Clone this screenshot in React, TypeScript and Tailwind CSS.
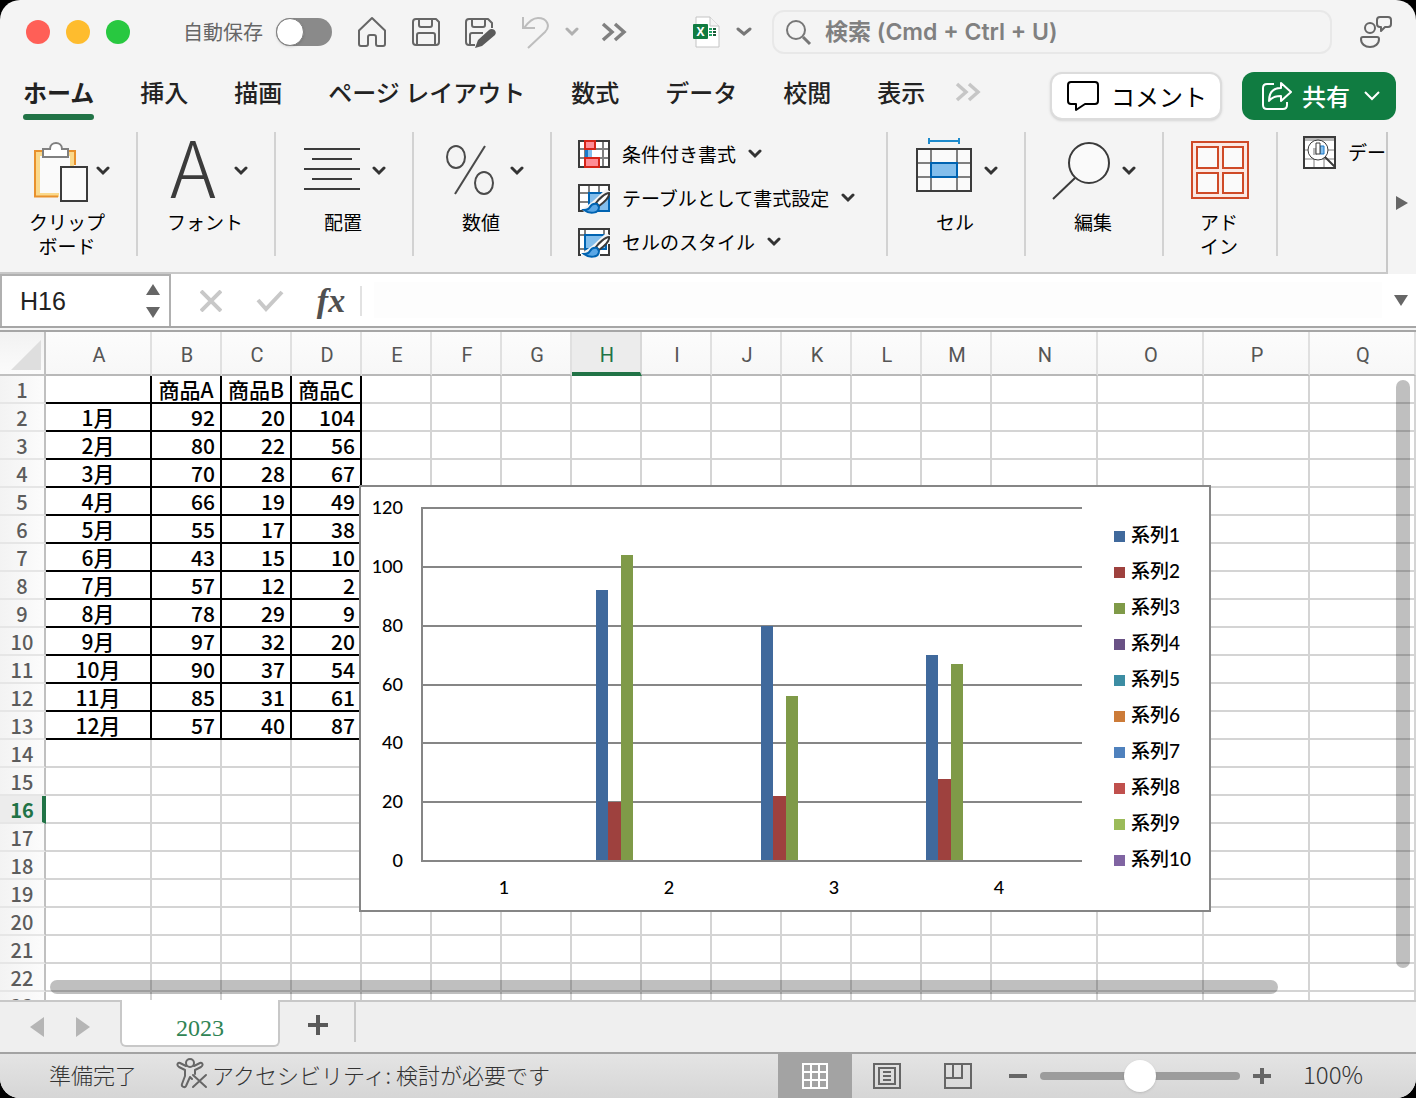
import { useState } from 'react';
import type { ReactNode } from 'react';
import clsx from 'clsx';

const TABS = ['ホーム', '挿入', '描画', 'ページ レイアウト', '数式', 'データ', '校閲', '表示'];

const COLUMNS = 'ABCDEFGHIJKLMNOPQ'.split('');
const WIDE_COLUMNS = ['A', 'N', 'O', 'P'];
const ROW_COUNT = 23;

const SHEET: (string | number)[][] = [
  ['', '商品A', '商品B', '商品C'],
  ['1月', 92, 20, 104],
  ['2月', 80, 22, 56],
  ['3月', 70, 28, 67],
  ['4月', 66, 19, 49],
  ['5月', 55, 17, 38],
  ['6月', 43, 15, 10],
  ['7月', 57, 12, 2],
  ['8月', 78, 29, 9],
  ['9月', 97, 32, 20],
  ['10月', 90, 37, 54],
  ['11月', 85, 31, 61],
  ['12月', 57, 40, 87],
];

const SERIES = [
  { name: '系列1', color: 'bg-[#40699c]' },
  { name: '系列2', color: 'bg-[#9e413e]' },
  { name: '系列3', color: 'bg-[#7f9a48]' },
  { name: '系列4', color: 'bg-[#695185]' },
  { name: '系列5', color: 'bg-[#3c8da3]' },
  { name: '系列6', color: 'bg-[#cc7b38]' },
  { name: '系列7', color: 'bg-[#4f81bd]' },
  { name: '系列8', color: 'bg-[#c0504d]' },
  { name: '系列9', color: 'bg-[#9bbb59]' },
  { name: '系列10', color: 'bg-[#8064a2]' },
];

const BAR_COLORS = ['#40699c', '#9e413e', '#7f9a48'];

function Chevron({ className = 'text-[#333333]' }: { className?: string }) {
  return (
    <svg width="14" height="10" viewBox="0 0 14 10" fill="none" className={clsx('shrink-0', className)}>
      <path d="M2 2l5 5 5-5" stroke="currentColor" strokeWidth="3" strokeLinecap="round" />
    </svg>
  );
}

function DoubleChevron({ className }: { className: string }) {
  return (
    <svg width="26" height="20" viewBox="0 0 26 20" fill="none" className={className}>
      <path d="M2 2l9 8-9 8M14 2l9 8-9 8" stroke="currentColor" strokeWidth="3.5" />
    </svg>
  );
}

function HomeIcon() {
  return (
    <svg width="28" height="32" viewBox="0 0 28 32" fill="none" stroke="#666666" strokeWidth="2" strokeLinejoin="round">
      <path d="M1 14.5L14 2l13 12.500V28q0 2-2 2h-5q-2 0-2-2v-7q0-2-2-2h-4q-2 0-2 2v7q0 2-2 2H3q-2 0-2-2z" />
    </svg>
  );
}

function SaveIcon() {
  return (
    <svg width="28" height="28" viewBox="0 0 28 28" fill="none" stroke="#666666" strokeWidth="2" strokeLinejoin="round">
      <path d="M4 1h20l3 3v20q0 3-3 3H4q-3 0-3-3V4q0-3 3-3z" />
      <path d="M7 1v6q0 2 2 2h9q2 0 2-2V1M5 27V17q0-2 2-2h14q2 0 2 2v10" />
    </svg>
  );
}

function SaveEditIcon() {
  return (
    <svg width="32" height="32" viewBox="0 0 32 32" fill="none" stroke="#666666" strokeWidth="2" strokeLinejoin="round">
      <path d="M10 29H4q-3 0-3-3V6q0-3 3-3h19l4 4v5M7 3v6q0 2 2 2h9q2 0 2-2V3M5 29V19q0-2 2-2h11" />
      <path d="M24 14c3-3 9 1 6 5L17 30l-7 2 3-8z" fill="#5a5a5a" stroke="none" />
    </svg>
  );
}

function UndoIcon() {
  return (
    <svg width="28" height="34" viewBox="0 0 28 34" fill="none" stroke="#bdbdbd" strokeWidth="2">
      <path d="M1 2v11h12M2 13C7 6 11 3 16 3c9 0 13 8 7 14L6 33" />
    </svg>
  );
}

function WorkbookIcon() {
  return (
    <svg width="28" height="32" viewBox="0 0 28 32">
      <path d="M3 1h14l9 9v21H3z" fill="#ffffff" stroke="#c4c4c4" />
      <path d="M17 1v9h9" fill="#f4f4f4" stroke="#c4c4c4" />
      <rect x="0" y="8" width="15" height="15" rx="1" fill="#107c41" />
      <path d="M16 12h3v2h-3zM16 15h3v2h-3zM16 18h3v2h-3z" fill="#21a366" />
      <path d="M20 12h3v2h-3zM20 15h3v2h-3zM20 18h3v2h-3z" fill="#185c37" />
      <text x="7.500" y="20" textAnchor="middle" fontSize="12" fontWeight="700" fontFamily="Open Sans, sans-serif" fill="#ffffff">
        X
      </text>
    </svg>
  );
}

function PresenceIcon() {
  return (
    <svg width="32" height="32" viewBox="0 0 32 32" fill="none" stroke="#666666" strokeWidth="2">
      <circle cx="10" cy="12" r="5" />
      <path d="M3 21h14q2 0 2 2c0 5-4 8-9 8s-9-3-9-8q0-2 2-2z" />
      <path d="M20 1h8q3 0 3 3v4q0 3-3 3h-3l-4 4v-4h-1q-3 0-3-3V4q0-3 3-3z" strokeLinejoin="round" />
    </svg>
  );
}

function ClipboardIcon() {
  return (
    <svg width="62" height="70" viewBox="0 0 62 70" fill="none">
      <path d="M9 15h40v45H9z" fill="#fafafa" />
      <path d="M12 18h35v-3M12 16v43h21M46 16v14" stroke="#fad98c" strokeWidth="4" />
      <path d="M32 60.500H9V15h8M41 15h8v14" stroke="#e8912d" strokeWidth="2" />
      <path d="M17 13h7c0-8 12-8 12 0h6v8H17z" fill="#ffffff" stroke="#808080" strokeWidth="2" />
      <path d="M35 31h26v34H35z" fill="#fafafa" stroke="#3b3b3b" strokeWidth="2" />
    </svg>
  );
}

function FontIcon() {
  return (
    <svg width="62" height="70" viewBox="0 0 62 70" className="overflow-visible">
      <text x="29" y="62" textAnchor="middle" fontSize="78" fontWeight="300" fontFamily="Noto Sans CJK JP, Roboto, sans-serif" fill="#3b3b3b">
        A
      </text>
    </svg>
  );
}

function AlignIcon() {
  return (
    <svg width="62" height="70" viewBox="0 0 62 70" stroke="#3b3b3b" strokeWidth="2">
      <path d="M2 13h56M10 23h40M2 33h56M10 43h40M2 53h56" />
    </svg>
  );
}

function PercentIcon() {
  return (
    <svg width="62" height="70" viewBox="0 0 62 70" fill="none" stroke="#4a4a4a" strokeWidth="2">
      <ellipse cx="16" cy="21" rx="9" ry="11" />
      <ellipse cx="44" cy="47" rx="9" ry="11" />
      <path d="M45 10L15 58" />
    </svg>
  );
}

function CellsIcon() {
  return (
    <svg width="62" height="70" viewBox="0 0 62 70" fill="none">
      <path d="M3 13h54v42H3z" fill="#fafafa" />
      <path d="M17 13v42M43 13v42M3 27h54M3 41h54" stroke="#808080" strokeWidth="2" />
      <path d="M3 13h54v42H3z" stroke="#3b3b3b" strokeWidth="2" />
      <path d="M17 27h26v14H17z" fill="#83beec" stroke="#0063b1" strokeWidth="2" />
      <path d="M15 5h30M15 2v6M45 2v6" stroke="#1e8bcd" strokeWidth="2" />
    </svg>
  );
}

function FindIcon() {
  return (
    <svg width="62" height="70" viewBox="0 0 62 70" fill="none" stroke="#3b3b3b" strokeWidth="2">
      <circle cx="37" cy="27" r="20" fill="#fafafa" />
      <path d="M23 42L1 63" />
    </svg>
  );
}

function AddInIcon() {
  return (
    <svg width="60" height="70" viewBox="0 0 60 70" fill="#fafafa" stroke="#cf4a27" strokeWidth="2">
      <path d="M2 6h56v56H2z" fill="#fbe9e4" />
      <path d="M7 11h21v21H7zM33 11h20v21H33zM7 37h21v20H7zM33 37h20v20H33z" />
    </svg>
  );
}

function ConditionalIcon() {
  return (
    <svg width="32" height="30" viewBox="0 0 32 30" fill="none">
      <path d="M1 2h30v26H1z" fill="#ffffff" />
      <path d="M7 2v26M25 2v26M1 10h30M1 19h30" stroke="#808080" strokeWidth="2" />
      <path d="M14 11h10v7H14z" fill="#ffffff" />
      <path d="M1 2h30v26H1z" stroke="#3b3b3b" strokeWidth="2" />
      <path d="M7 11h7v8H7z" fill="#83beec" />
      <path d="M7 11h3v8H7z" fill="#1979ca" />
      <path d="M7 2h10v8H7zM7 19h14v9H7z" fill="#ff8d96" stroke="#d62418" strokeWidth="2" />
    </svg>
  );
}

function Brush() {
  return (
    <>
      <path d="M31 9L17 22l-11 8" stroke="#f4f4f4" strokeWidth="7" />
      <path d="M31 11c-4 0-11 7-13 10l3 3c4-3 11-9 10-13z" fill="#ffffff" stroke="#3b3b3b" strokeWidth="2" />
      <path d="M19 22c-4-1-6 1-7 3-1 2-3 3-6 3 5 4 15 4 15-3z" fill="#5aa7e6" stroke="#0063b1" strokeWidth="2" />
    </>
  );
}

function FormatTableIcon() {
  return (
    <svg width="32" height="32" viewBox="0 0 32 32" fill="none">
      <path d="M1 3h30v26H1z" fill="#ffffff" />
      <path d="M11 3v26M21 3v8M1 11h30M1 20h10" stroke="#808080" strokeWidth="2" />
      <path d="M11 11h20v18H11z" fill="#83beec" stroke="#0063b1" strokeWidth="2" />
      <path d="M9 29H1V3h30v6" stroke="#3b3b3b" strokeWidth="2" />
      <Brush />
    </svg>
  );
}

function CellStyleIcon() {
  return (
    <svg width="32" height="32" viewBox="0 0 32 32" fill="none">
      <path d="M1 3h30v26H1z" fill="#ffffff" />
      <path d="M7 3v26M26 3v6M1 9h30M1 23h8" stroke="#808080" strokeWidth="2" />
      <path d="M7 9h21v14H7z" fill="#83beec" stroke="#0063b1" strokeWidth="2" />
      <path d="M3 29H1V3h30v6M22 29h9V18" stroke="#3b3b3b" strokeWidth="2" />
      <Brush />
    </svg>
  );
}

function AnalyzeIcon() {
  return (
    <svg width="34" height="34" viewBox="0 0 34 34" fill="none">
      <path d="M2 2h31v31H2z" fill="#ffffff" />
      <path d="M2 2h31v4H2z" fill="#b8b8b8" />
      <path d="M2 15h31M2 24h31M12 22v10M22 22v10" stroke="#808080" />
      <path d="M2 2h31v31H2z" stroke="#3b3b3b" strokeWidth="2" />
      <circle cx="16" cy="15" r="10" fill="#ffffff" stroke="#3b3b3b" />
      <path d="M11 13h4v7h-4z" fill="#b8b8b8" />
      <path d="M18 11h4v8h-4z" fill="#83beec" stroke="#1979ca" />
      <path d="M14 8h4v11h-4z" fill="#ffffff" stroke="#3b3b3b" />
      <path d="M23 22l10 10" stroke="#3b3b3b" strokeWidth="2" />
    </svg>
  );
}

function AccessibilityIcon() {
  return (
    <svg width="32" height="32" viewBox="0 0 32 32" fill="none" stroke="#666666" strokeWidth="2" strokeLinejoin="round" strokeLinecap="round" className="shrink-0">
      <circle cx="14" cy="5" r="4" />
      <path d="M10 8L4 5C2 4 0 7 3 9l6 3v6L6 26c-1 3 3 4 4 2l4-9 2 2M18 8l6-3c2-1 4 2 1 4l-6 3v4" />
      <path d="M17 17l13 12M30 17L17 29" />
    </svg>
  );
}

function TitleBar() {
  const [autoSave, setAutoSave] = useState(false);

  return (
    <header className="flex h-16 shrink-0 items-center pl-[26px] pr-6">
      <div className="flex gap-4">
        <button aria-label="閉じる" className="size-6 rounded-full bg-[#ff5f57]" />
        <button aria-label="しまう" className="size-6 rounded-full bg-[#febc2e]" />
        <button aria-label="拡大" className="size-6 rounded-full bg-[#28c840]" />
      </div>
      <label className="ml-[53px] flex shrink-0 items-center gap-[13px] text-xl text-[#666666]">
        自動保存
        <input
          type="checkbox"
          checked={autoSave}
          onChange={(e) => setAutoSave(e.target.checked)}
          className="h-7 w-14 appearance-none rounded-full bg-[#8a8a8a] before:block before:size-7 before:rounded-full before:border before:border-[#7d7d7d] before:bg-white before:shadow checked:bg-[#107c41] checked:before:ml-7"
        />
      </label>
      <button aria-label="ホーム画面" className="ml-[26px]"><HomeIcon /></button>
      <button aria-label="保存" className="ml-[26px]"><SaveIcon /></button>
      <button aria-label="名前を付けて保存" className="ml-[25px]"><SaveEditIcon /></button>
      <button aria-label="元に戻す" className="ml-[25px]"><UndoIcon /></button>
      <button aria-label="元に戻す履歴" className="ml-[15px]"><Chevron className="text-[#b0b0b0]" /></button>
      <button aria-label="その他のコマンド" className="ml-[22px]"><DoubleChevron className="text-[#808080]" /></button>
      <button aria-label="ブック" className="ml-[66px]"><WorkbookIcon /></button>
      <button aria-label="ブックのメニュー" className="ml-[15px]">
        <svg width="16" height="10" viewBox="0 0 16 10" fill="none" stroke="#777777" strokeWidth="3" strokeLinecap="round">
          <path d="M2 2l6 5 6-5" />
        </svg>
      </button>
      <div className="ml-5 flex h-11 min-w-0 flex-1 items-center gap-3 rounded-xl border-2 border-[#e8e8e8] px-[11px]">
        <svg width="28" height="28" viewBox="0 0 28 28" fill="none" stroke="#777777" className="shrink-0">
          <circle cx="11" cy="12" r="9" strokeWidth="2" />
          <path d="M18 19l7 7" strokeWidth="3" />
        </svg>
        <input
          type="search"
          aria-label="検索"
          placeholder="検索 (Cmd + Ctrl + U)"
          className="min-w-0 flex-1 bg-transparent font-['Inter','Noto_Sans_CJK_JP',sans-serif] text-[23px] font-semibold outline-none placeholder:text-[#808080]"
        />
      </div>
      <button aria-label="プレゼンス" className="ml-7"><PresenceIcon /></button>
    </header>
  );
}

function TabBar() {
  const [active, setActive] = useState('ホーム');

  return (
    <div className="flex h-[60px] shrink-0 items-start pl-[23px] pr-5 pt-2">
      <nav className="flex gap-[46px] text-2xl font-medium text-[#222222]">
        {TABS.map((tab) => (
          <button
            key={tab}
            onClick={() => setActive(tab)}
            className={clsx('flex h-12 flex-col justify-between whitespace-nowrap leading-10', active === tab && 'font-bold')}
          >
            {tab}
            {active === tab && <span className="block h-[6px] w-full rounded-full bg-[#217346]" />}
          </button>
        ))}
      </nav>
      <button aria-label="その他のタブ" className="ml-[30px] mt-[10px]"><DoubleChevron className="text-[#c6c6c6]" /></button>
      <button className="ml-auto flex h-12 w-[172px] items-center justify-center gap-3 rounded-xl border-2 border-[#dcdcdc] bg-white pl-[2px] text-2xl text-black shadow-sm">
        <svg width="32" height="32" viewBox="0 0 32 32" fill="none" stroke="currentColor" strokeWidth="2" strokeLinejoin="round" className="shrink-0">
          <path d="M4 2h24q3 0 3 3v16q0 3-3 3H18l-9 6v-6H4q-3 0-3-3V5q0-3 3-3z" />
        </svg>
        コメント
      </button>
      <button className="ml-5 flex h-12 w-[154px] items-center justify-center gap-[9px] rounded-xl bg-[#107c41] pl-1 text-2xl font-medium text-white">
        <svg width="32" height="30" viewBox="0 0 32 30" fill="none" stroke="currentColor" strokeWidth="2" strokeLinejoin="round" className="shrink-0">
          <path d="M13 3H6Q2 3 2 7v17q0 4 4 4h16q4 0 4-4v-3" />
          <path d="M20 2l10 9-10 9v-5c-6 0-9 1-12 5 0-8 4-13 12-13z" />
        </svg>
        共有
        <svg width="18" height="12" viewBox="0 0 18 12" fill="none" className="ml-1 shrink-0">
          <path d="M2 2l7 7 7-7" stroke="currentColor" strokeWidth="2" />
        </svg>
      </button>
    </div>
  );
}

function RibbonGroup({ icon, lines, menu = true }: { icon: ReactNode; lines: string[]; menu?: boolean }) {
  return (
    <button
      className={clsx(
        "flex h-[124px] shrink-0 flex-col items-center gap-[6px] border-r-2 border-[#d2d2d2] pt-1 font-['Liberation_Sans','Noto_Sans_CJK_JP',sans-serif] text-[19px] leading-6 text-black",
        menu ? 'w-[138px]' : 'w-[114px]',
      )}
    >
      <span className="flex items-center gap-2">
        {icon}
        {menu && <Chevron />}
      </span>
      <span className="pr-[2px]">
        {lines.map((line) => (
          <span key={line} className="block">{line}</span>
        ))}
      </span>
    </button>
  );
}

function StyleCommand({ icon, label }: { icon: ReactNode; label: string }) {
  return (
    <button className="flex h-11 items-center gap-3 text-[19px] text-black">
      {icon}
      <span className="whitespace-nowrap">{label}</span>
      <Chevron />
    </button>
  );
}

function Ribbon() {
  return (
    <div className="flex shrink-0">
      <div className="flex h-[150px] min-w-0 flex-1 items-start border-b-2 border-[#c8c8c8] pt-2">
        <RibbonGroup icon={<ClipboardIcon />} lines={['クリップ', 'ボード']} />
        <RibbonGroup icon={<FontIcon />} lines={['フォント']} />
        <RibbonGroup icon={<AlignIcon />} lines={['配置']} />
        <RibbonGroup icon={<PercentIcon />} lines={['数値']} />
        <div className="flex w-[336px] shrink-0 items-start justify-between">
          <div className="pl-[26px]">
            <StyleCommand icon={<ConditionalIcon />} label="条件付き書式" />
            <StyleCommand icon={<FormatTableIcon />} label="テーブルとして書式設定" />
            <StyleCommand icon={<CellStyleIcon />} label="セルのスタイル" />
          </div>
          <div className="h-[124px] w-[2px] bg-[#d2d2d2]" />
        </div>
        <RibbonGroup icon={<CellsIcon />} lines={['セル']} />
        <RibbonGroup icon={<FindIcon />} lines={['編集']} />
        <RibbonGroup icon={<AddInIcon />} lines={['アド', 'イン']} menu={false} />
        <div className="flex h-[140px] flex-1 border-r-2 border-[#c8c8c8] pl-6">
          <button className="flex h-10 items-center gap-3 whitespace-nowrap text-[19px] text-black">
            <AnalyzeIcon />
            デー
          </button>
        </div>
      </div>
      <button aria-label="リボンを右へスクロール" className="flex w-7 items-center justify-center pt-2">
        <svg width="12" height="14" viewBox="0 0 12 14" fill="#666666"><path d="M0 0l12 7-12 7z" /></svg>
      </button>
    </div>
  );
}

function FormulaBar() {
  const [cell, setCell] = useState('H16');

  return (
    <div className="flex h-[54px] shrink-0 items-stretch border-b-2 border-[#a6a6a6] bg-white">
      <div className="flex w-[171px] items-center border-2 border-b-0 border-[#b0b0b0] pl-[18px] pr-[9px]">
        <input
          aria-label="名前ボックス"
          value={cell}
          onChange={(e) => setCell(e.target.value)}
          className="min-w-0 flex-1 font-['Liberation_Sans',sans-serif] text-[25px] leading-none text-[#222222] outline-none"
        />
        <span className="flex flex-col gap-3">
          <button aria-label="上へ">
            <svg width="14" height="11" viewBox="0 0 14 11" fill="#666666"><path d="M0 11L7 0l7 11z" /></svg>
          </button>
          <button aria-label="下へ">
            <svg width="14" height="11" viewBox="0 0 14 11" fill="#666666"><path d="M0 0l7 11 7-11z" /></svg>
          </button>
        </span>
      </div>
      <div className="flex items-center pl-[29px] pt-[2px]">
        <button aria-label="キャンセル">
          <svg width="22" height="22" viewBox="0 0 22 22" stroke="#c8c8c8" strokeWidth="4"><path d="M1 1l20 20M21 1L1 21" /></svg>
        </button>
        <button aria-label="入力" className="ml-[34px]">
          <svg width="28" height="22" viewBox="0 0 28 22" fill="none" stroke="#c8c8c8" strokeWidth="4"><path d="M2 10l8 9L26 2" /></svg>
        </button>
        <button
          aria-label="関数の挿入"
          className="ml-[31px] w-8 font-['Liberation_Serif',serif] text-[34px] font-bold italic leading-none text-[#505050]"
        >
          fx
        </button>
        <div className="ml-[13px] h-[30px] w-[2px] bg-[#e2e2e2]" />
      </div>
      <input aria-label="数式バー" className="my-2 ml-3 min-w-0 flex-1 bg-[#fdfdfd] text-xl outline-none" />
      <button aria-label="数式バーの展開" className="pl-3 pr-2">
        <svg width="14" height="11" viewBox="0 0 14 11" fill="#666666"><path d="M0 0h14L7 11z" /></svg>
      </button>
    </div>
  );
}

function Chart() {
  const y = (value: number) => 374 - (value * 353) / 120;

  return (
    <figure
      aria-label="グラフ"
      className="absolute left-[359px] top-[153px] flex h-[427px] w-[852px] border-2 border-[#868686] bg-white font-['Lato','Noto_Sans_CJK_JP',sans-serif] text-black"
    >
      <svg width="724" height="423" viewBox="0 0 724 423" className="shrink-0 text-lg font-medium" fill="#000000">
        {[0, 20, 40, 60, 80, 100, 120].map((tick) => (
          <g key={tick}>
            <path d={`M61 ${Math.round(y(tick))}H721`} stroke="#868686" strokeWidth="2" />
            <text x="42" y={Math.round(y(tick)) + 6} textAnchor="end">{tick}</text>
          </g>
        ))}
        <path d="M61 20V375" stroke="#868686" strokeWidth="2" />
        {SHEET.slice(1, 4).map((row, i) =>
          row.slice(1).map((value, j) => (
            <rect
              key={`${i}-${j}`}
              x={235 + i * 165 + [0, 12, 25][j]}
              y={Math.round(y(Number(value)))}
              width={j === 1 ? 13 : 12}
              height={373 - Math.round(y(Number(value)))}
              fill={BAR_COLORS[j]}
            />
          )),
        )}
        {[1, 2, 3, 4].map((label, i) => (
          <text key={label} x={143 + i * 165} y="407" textAnchor="middle">{label}</text>
        ))}
      </svg>
      <ul className="pl-[29px] pt-[30px] text-[19px] font-medium">
        {SERIES.map((series) => (
          <li key={series.name} className="flex h-9 items-center gap-[6px] whitespace-nowrap">
            <span className={clsx('mt-[2px] size-[11px]', series.color)} />
            {series.name}
          </li>
        ))}
      </ul>
    </figure>
  );
}

function Grid() {
  return (
    <div className="relative min-h-0 flex-1 overflow-hidden border-t-2 border-[#a6a6a6] bg-white">
      <table className="w-full table-fixed border-separate border-spacing-0 text-[21px] leading-6 text-black">
        <colgroup>
          <col className="w-[46px]" />
          {COLUMNS.map((col) => (
            <col key={col} className={clsx(WIDE_COLUMNS.includes(col) ? 'w-[106px]' : col !== 'Q' && 'w-[70px]')} />
          ))}
        </colgroup>
        <thead>
          <tr className="h-11 text-xl text-[#555555]">
            <th className="border-b-2 border-r-2 border-[#c0c0c0] bg-linear-to-b from-[#f2f2f2] to-[#fbfbfb] p-0">
              <svg width="30" height="30" viewBox="0 0 30 30" fill="#dedede" className="ml-[11px] mt-1"><path d="M30 0v30H0z" /></svg>
            </th>
            {COLUMNS.map((col) => (
              <th
                key={col}
                scope="col"
                className={clsx(
                  "p-0 pl-[2px] font-['Roboto',sans-serif] font-normal",
                  col === 'H'
                    ? 'border-b-4 border-r-2 border-b-[#217346] border-r-[#d8d8d8] bg-[#ececec] pt-[5px] font-medium text-[#217346]'
                    : 'border-b-2 border-r-2 border-b-[#b8b8b8] border-r-[#e0e0e0] bg-linear-to-b from-[#fcfcfc] to-[#f7f7f7] pt-[3px]',
                )}
              >
                {col}
              </th>
            ))}
          </tr>
        </thead>
        <tbody>
          {Array.from({ length: ROW_COUNT }, (_, r) => (
            <tr key={r} className="h-7">
              <th
                scope="row"
                className={clsx(
                  'border-b-2 border-b-[#e6e6e6] p-0 pt-[2px] text-xl leading-6',
                  r === 15
                    ? 'border-r-4 border-r-[#217346] bg-[#ececec] pl-[2px] font-bold text-[#217346]'
                    : 'border-r-2 border-r-[#c0c0c0] bg-linear-to-r from-[#f3f3f3] to-[#fcfcfc] font-medium text-[#5c5c5c]',
                )}
              >
                {r + 1}
              </th>
              {COLUMNS.map((col, c) => {
                const value = SHEET[r]?.[c];
                const filled = value !== undefined;
                return (
                  <td
                    key={col}
                    className={clsx(
                      'whitespace-nowrap border-b-2 border-r-2 py-0',
                      filled ? 'border-black font-medium' : 'border-[#d4d4d4]',
                      typeof value === 'number' ? 'pl-0 pr-[5px] text-right' : 'px-0 text-center',
                    )}
                  >
                    {value}
                  </td>
                );
              })}
            </tr>
          ))}
        </tbody>
      </table>
      <Chart />
      <div className="absolute bottom-8 right-[6px] top-12 w-[14px] rounded-full bg-black/25" />
      <div className="absolute bottom-[6px] left-[50px] right-[138px] h-[14px] rounded-full bg-black/25" />
    </div>
  );
}

function SheetTabs() {
  return (
    <div className="flex h-[52px] shrink-0 items-start bg-[#efefef]">
      <div className="flex h-full w-[120px] items-center gap-8 border-t-2 border-[#c8c8c8] pl-[30px]">
        <button aria-label="前のシート">
          <svg width="14" height="20" viewBox="0 0 14 20" fill="#b5b5b5"><path d="M14 0v20L0 10z" /></svg>
        </button>
        <button aria-label="次のシート">
          <svg width="14" height="20" viewBox="0 0 14 20" fill="#b5b5b5"><path d="M0 0v20l14-10z" /></svg>
        </button>
      </div>
      <button className="h-[47px] w-[160px] rounded-b-md border-x-2 border-b-2 border-[#c8c8c8] bg-white pt-[10px] font-['Liberation_Serif',serif] text-2xl text-[#2f8454]">
        2023
      </button>
      <div className="flex h-full flex-1 items-start border-t-2 border-[#c8c8c8]">
        <button aria-label="新しいシート" className="flex h-[46px] w-[74px] items-center justify-center pl-[2px]">
          <svg width="20" height="20" viewBox="0 0 20 20" stroke="#595959" strokeWidth="4"><path d="M0 10h20M10 0v20" /></svg>
        </button>
        <div className="h-10 w-[2px] bg-[#c8c8c8]" />
      </div>
    </div>
  );
}

function StatusBar() {
  const [zoom, setZoom] = useState(100);

  return (
    <footer className="flex h-[46px] shrink-0 items-center border-t-2 border-[#a3a3a3] bg-linear-to-b from-[#e4e4e4] to-[#d6d6d6] pl-[49px] pr-[49px] text-[22px] font-light text-[#333333]">
      <span className="pb-1">準備完了</span>
      <button className="ml-[39px] flex items-center gap-1 whitespace-nowrap pb-1">
        <AccessibilityIcon />
        アクセシビリティ: 検討が必要です
      </button>
      <div className="ml-auto flex h-full items-center">
        <button aria-label="標準" className="flex h-full w-[74px] items-center justify-center bg-[#a3a3a3]">
          <svg width="26" height="26" viewBox="0 0 26 26" fill="none" stroke="#ffffff" strokeWidth="2">
            <path d="M1 1h24v24H1zM1 9h24M1 17h24M9 1v24M17 1v24" />
          </svg>
        </button>
        <button aria-label="ページ レイアウト表示" className="ml-[21px]">
          <svg width="28" height="26" viewBox="0 0 28 26" fill="none" stroke="#666666" strokeWidth="2">
            <path d="M1 1h26v24H1zM6 5h16v16H6zM10 9h8M10 13h8M10 17h8" />
          </svg>
        </button>
        <button aria-label="改ページ プレビュー" className="ml-[43px]">
          <svg width="28" height="26" viewBox="0 0 28 26" fill="none" stroke="#666666" strokeWidth="2">
            <path d="M1 1h26v24H1zM1 15h17V1M9 1v14" />
          </svg>
        </button>
        <button aria-label="縮小" onClick={() => setZoom(Math.max(0, zoom - 10))} className="ml-[37px]">
          <svg width="18" height="18" viewBox="0 0 18 18" stroke="#666666" strokeWidth="4"><path d="M0 9h18" /></svg>
        </button>
        <input
          type="range"
          aria-label="ズーム"
          min={0}
          max={200}
          value={zoom}
          onChange={(e) => setZoom(Number(e.target.value))}
          className="mx-[13px] h-2 w-[200px] appearance-none rounded-full bg-[#9c9c9c] [&::-webkit-slider-thumb]:size-8 [&::-webkit-slider-thumb]:appearance-none [&::-webkit-slider-thumb]:rounded-full [&::-webkit-slider-thumb]:bg-white [&::-webkit-slider-thumb]:shadow"
        />
        <button aria-label="拡大表示" onClick={() => setZoom(Math.min(200, zoom + 10))}>
          <svg width="18" height="18" viewBox="0 0 18 18" stroke="#666666" strokeWidth="4"><path d="M0 9h18M9 1v16" /></svg>
        </button>
        <span className="ml-8 w-16 pb-1 text-2xl">{zoom}%</span>
      </div>
    </footer>
  );
}

export default function App() {
  return (
    <div className="h-screen bg-black font-['Noto_Sans_CJK_JP',sans-serif]">
      <div className="flex h-full flex-col overflow-hidden rounded-[20px] bg-[#f4f4f4]">
        <TitleBar />
        <TabBar />
        <Ribbon />
        <FormulaBar />
        <div className="h-[2px] shrink-0 bg-[#f4f4f4]" />
        <Grid />
        <SheetTabs />
        <StatusBar />
      </div>
    </div>
  );
}
